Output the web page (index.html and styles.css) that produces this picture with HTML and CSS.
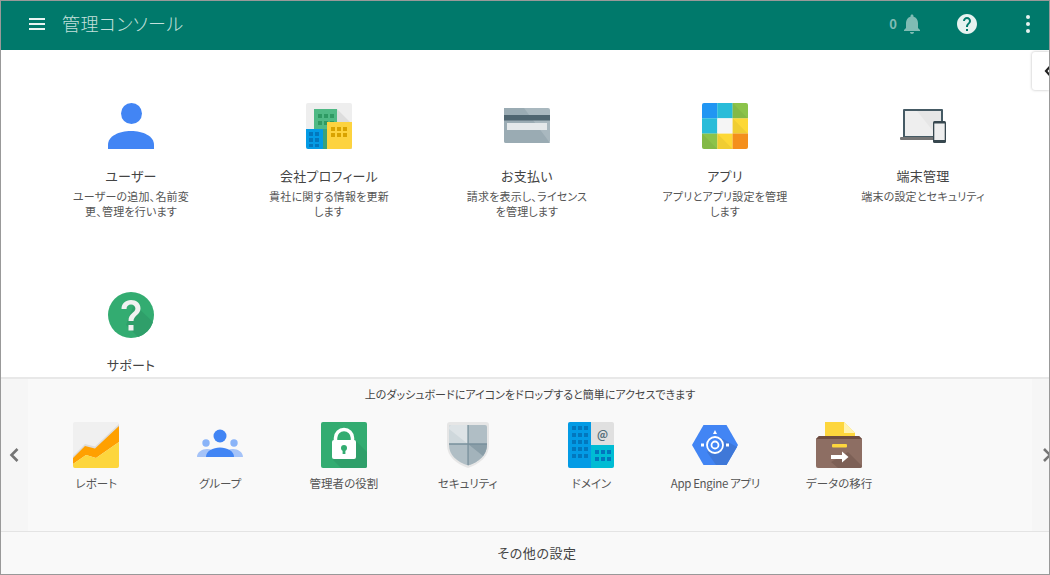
FILE: index.html
```html
<!DOCTYPE html>
<html lang="ja">
<head>
<meta charset="utf-8">
<title>管理コンソール</title>
<link rel="stylesheet" href="styles.css">
</head>
<body>
<div class="window">
  <header class="topbar">
    <svg class="menu" viewBox="0 0 16 12"><path d="M0 0h16v2H0zM0 5h16v2H0zM0 10h16v2H0z"/></svg>
    <h1 class="brand">管理コンソール</h1>
    <span class="count">0</span>
    <svg class="bell" viewBox="4 2 16 20"><path d="M12 22c1.1 0 2-.9 2-2h-4c0 1.1.89 2 2 2zm6-6v-5c0-3.07-1.64-5.64-4.5-6.32V4c0-.83-.67-1.5-1.5-1.5s-1.5.67-1.5 1.5v.68C7.63 5.36 6 7.92 6 11v5l-2 2v1h16v-1l-2-2z"/></svg>
    <svg class="help" viewBox="2 2 20 20"><path d="M12 2C6.48 2 2 6.48 2 12s4.48 10 10 10 10-4.48 10-10S17.52 2 12 2zm1 17h-2v-2h2v2zm2.07-7.75l-.9.92C13.45 12.9 13 13.5 13 15h-2v-.5c0-1.1.45-2.1 1.17-2.83l1.24-1.26c.37-.36.59-.86.59-1.41 0-1.1-.9-2-2-2s-2 .9-2 2H8c0-2.21 1.79-4 4-4s4 1.79 4 4c0 .88-.36 1.68-.93 2.25z"/></svg>
    <svg class="dots" viewBox="0 0 4 18"><circle cx="2" cy="2" r="2"/><circle cx="2" cy="9" r="2"/><circle cx="2" cy="16" r="2"/></svg>
  </header>

  <main class="dash">
    <div class="sidetab"><svg viewBox="0 0 8 12"><path d="M6 1.500 2 6l4 4.500" fill="none" stroke="#222" stroke-width="2.200"/></svg></div>
    <div class="tiles">
      <section class="tile">
        <svg class="ico" viewBox="0 0 46 46"><circle cx="23.5" cy="10.5" r="10.5" fill="#4285f4"/><path d="M0 46v-4C0 33 11 28 23 28s23 5 23 14v4z" fill="#4285f4"/></svg>
        <h2>ユーザー</h2>
        <p>ユーザーの追加、名前変更、管理を行います</p>
      </section>
      <section class="tile">
        <svg class="ico" viewBox="0 0 46 46"><rect width="46" height="46" rx="2" fill="#eee"/><path d="M31 6 46 21V46H20z" fill="#ddd"/><rect x="8" y="6" width="23" height="40" fill="#4fb985"/><g fill="#2e9a63"><path d="M12 11h4v4h-4zM18 11h4v4h-4zM24 11h4v4h-4zM12 18h4v4h-4zM18 18h4v4h-4zM24 18h4v4h-4z"/></g><path d="M0 26h17v20H2a2 2 0 0 1-2-2z" fill="#039be5"/><g fill="#0277bd"><path d="M3 29h4v4H3zM9 29h4v4H9zM3 35h4v4H3zM9 35h4v4H9zM3 41h4v3H3zM9 41h4v3H9z"/></g><path d="M17 26h4v20h-4z" fill="#3aa17a"/><path d="M21 19h25v25a2 2 0 0 1-2 2H21z" fill="#fdd33f"/><g fill="#d9a300"><path d="M25 24h4v4h-4zM31 24h4v4h-4zM37 24h4v4h-4zM25 30h4v4h-4zM31 30h4v4h-4zM37 30h4v4h-4z"/></g></svg>
        <h2>会社プロフィール</h2>
        <p>貴社に関する情報を更新します</p>
      </section>
      <section class="tile">
        <svg class="ico" viewBox="0 0 46 46"><rect y="5" width="46" height="35" rx="2" fill="#a9b8bf"/><path d="M0 5h20l26 35H2a2 2 0 0 1-2-2z" fill="#9aabb3"/><rect y="12" width="46" height="5.500" fill="#4f6570"/><rect x="3" y="20" width="40" height="7" fill="#e4e8ea"/></svg>
        <h2>お支払い</h2>
        <p>請求を表示し、ライセンスを管理します</p>
      </section>
      <section class="tile">
        <svg class="ico" viewBox="0 0 46 46"><defs><clipPath id="rc"><rect width="46" height="46" rx="2"/></clipPath></defs><g clip-path="url(#rc)"><rect width="15.4" height="15.4" fill="#2196f3"/><rect x="15.3" width="15.4" height="15.4" fill="#29bcd9"/><rect x="30.6" width="15.4" height="15.4" fill="#8bc34a"/><rect y="15.3" width="15.4" height="15.4" fill="#29bcd9"/><rect x="15.3" y="15.3" width="15.4" height="15.4" fill="#f5f5f5"/><rect x="30.6" y="15.3" width="15.4" height="15.4" fill="#fdd835"/><rect y="30.6" width="15.4" height="15.4" fill="#8bc34a"/><rect x="15.3" y="30.6" width="15.4" height="15.4" fill="#fdd835"/><rect x="30.6" y="30.6" width="15.4" height="15.4" fill="#f48f1c"/><path d="M30.6 0 46 15.4H30.6zM30.6 15.3 46 30.7H30.6zM0 30.6 15.4 46H0zM15.3 30.6 30.7 46H15.3z" fill="#000" opacity=".05"/></g></svg>
        <h2>アプリ</h2>
        <p>アプリとアプリ設定を管理します</p>
      </section>
      <section class="tile">
        <svg class="ico" viewBox="0 0 46 46"><rect x="3" y="6" width="40" height="29" rx="1" fill="#455a64"/><rect x="5" y="8" width="36" height="25" fill="#e6e6e6"/><path d="M5 8h12l20 25H5z" fill="#eee"/><rect x="0" y="34" width="38" height="3" rx="1" fill="#757575"/><rect x="33" y="18" width="13" height="22" rx="1.5" fill="#37474f"/><rect x="34.3" y="20.5" width="10.4" height="16.5" fill="#eee"/></svg>
        <h2>端末管理</h2>
        <p>端末の設定とセキュリティ</p>
      </section>
      <section class="tile">
        <svg class="ico" viewBox="0 0 46 46"><circle cx="23" cy="23" r="23" fill="#33ac71"/><path d="M26 12 45 30A23 23 0 0 1 30 45L18 33z" fill="#2f9f6a"/><path d="M23 8c-5.500 0-9.500 3.500-9.500 9h5c0-2.700 2-4.400 4.500-4.400s4.400 1.700 4.400 4c0 4.400-6.900 4.500-6.900 12.400h5c0-5.400 7-6.400 7-12.600C32.500 11.300 28.500 8 23 8zM20.500 33h5v5.500h-5z" fill="#f1f1f1"/></svg>
        <h2>サポート</h2>
      </section>
    </div>
  </main>

  <section class="tray">
    <div class="pager"><svg viewBox="0 0 10 14"><path d="M8.500 1 2.500 7l6 6" fill="none" stroke="#757575" stroke-width="2.600"/></svg></div>
    <div class="shelf">
      <div class="hint">上のダッシュボードにアイコンをドロップすると簡単にアクセスできます</div>
      <div class="items">
        <div class="item">
          <svg class="ico" viewBox="0 0 46 46"><rect width="46" height="46" rx="2" fill="#f0f0f0"/><path d="M0 34 12 22l10 2.500L46 2v3L22 27l-10-2.500L0 37z" fill="#ddd"/><path d="M0 36 12 24l10 2.500L46 4v16L23 36l-10-3L0 42z" fill="#ffa000"/><path d="M0 42l13-9 10 3 23-16v24a2 2 0 0 1-2 2H2a2 2 0 0 1-2-2z" fill="#fdd63d"/></svg>
          <span>レポート</span>
        </div>
        <div class="item">
          <svg class="ico" viewBox="0 0 46 46"><circle cx="9" cy="21" r="3.700" fill="#8ab4f8"/><circle cx="37" cy="21" r="3.700" fill="#8ab4f8"/><path d="M0 35c0-5 5-8 10-8 4 0 7 2 9 4h8c2-2 5-4 9-4 5 0 10 3 10 8z" fill="#a5c3f8"/><circle cx="23" cy="14" r="6.500" fill="#4285f4"/><path d="M9 35c0-6 7-9.500 14-9.500S37 29 37 35z" fill="#4285f4"/></svg>
          <span>グループ</span>
        </div>
        <div class="item">
          <svg class="ico" viewBox="0 0 46 46"><rect width="46" height="46" rx="2" fill="#33ac71"/><path d="M33 17 46 30v14a2 2 0 0 1-2 2H20L12 38z" fill="#2f9f6a"/><path d="M14.500 20v-4a8.500 8.500 0 0 1 17 0v4" fill="none" stroke="#fff" stroke-width="3.500"/><rect x="11" y="18" width="24" height="19" rx="2" fill="#fff"/><circle cx="23" cy="26" r="3" fill="#33ac71"/><rect x="21.600" y="26" width="2.800" height="6" fill="#33ac71"/></svg>
          <span>管理者の役割</span>
        </div>
        <div class="item">
          <svg class="ico" viewBox="0 0 46 46"><path d="M5 0h36a3 3 0 0 1 3 3v20c0 11-9 19-21 23C11 42 2 34 2 23V3a3 3 0 0 1 3-3z" fill="#e6e6e6"/><path d="M6 3h34a2 2 0 0 1 2 2v18c0 10-8 17-19 20.500C12 40 4 33 4 23V5a2 2 0 0 1 2-2z" fill="#b0bec5"/><path d="M6 3h17v19H4V5a2 2 0 0 1 2-2z" fill="#dde3e6"/><path d="M4 7 23 22H4z" fill="#cfd8dc"/><path d="M23 22h19c0 11-8 18-19 21.500z" fill="#a3b3bb"/><path d="M23 22h19c0 4-1 8-4 12z" fill="#8a9ea8"/><path d="M4 21.300h38v1.400H4zM22.400 3h1.300v40h-1.300z" fill="#78909c"/></svg>
          <span>セキュリティ</span>
        </div>
        <div class="item">
          <svg class="ico" viewBox="0 0 46 46"><rect width="46" height="46" rx="2" fill="#e0e0e0"/><path d="M0 2a2 2 0 0 1 2-2h21v46H2a2 2 0 0 1-2-2z" fill="#039be5"/><path d="M23 23h23v21a2 2 0 0 1-2 2H23z" fill="#00bcd4"/><g fill="#0277bd"><path d="M4 4h4v4H4zM10 4h4v4h-4zM16 4h4v4h-4zM4 11h4v4H4zM10 11h4v4h-4zM16 11h4v4h-4zM4 18h4v4H4zM10 18h4v4h-4zM16 18h4v4h-4zM4 25h4v4H4zM10 25h4v4h-4zM16 25h4v4h-4zM4 32h4v4H4zM10 32h4v4h-4zM16 32h4v4h-4zM27 28h4v4h-4zM33 28h4v4h-4zM39 28h4v4h-4zM27 35h4v4h-4zM33 35h4v4h-4zM39 35h4v4h-4z"/></g><text class="at" x="34.500" y="17" text-anchor="middle">@</text></svg>
          <span>ドメイン</span>
        </div>
        <div class="item">
          <svg class="ico" viewBox="0 0 46 46"><path d="M11.500 3h23L46 23 34.500 43h-23L0 23z" fill="#4285f4"/><path d="M29 16 45 25 34.500 43H24L15 30z" fill="#3f78d8"/><circle cx="23" cy="23" r="8" fill="#4285f4" stroke="#fff" stroke-width="1.800"/><circle cx="23" cy="23" r="3.500" fill="none" stroke="#fff" stroke-width="1.800"/><path d="M23 8l2 4h-4zM9 21.500h3v3H9zM34 21.500h3v3h-3z" fill="#fff"/></svg>
          <span class="latin">App Engine アプリ</span>
        </div>
        <div class="item">
          <svg class="ico" viewBox="0 0 46 46"><path d="M9 0h19l11 11v10H9z" fill="#fdd63d"/><path d="M28 0l11 11H28z" fill="#fff3b0"/><path d="M3 14h40l3 3v27a2 2 0 0 1-2 2H2a2 2 0 0 1-2-2V17z" fill="#8d6e63"/><path d="M3 14h40l3 3H0z" fill="#6d4c41"/><path d="M32 30 46 44a2 2 0 0 1-2 2H22L15 40z" fill="#7d6056"/><rect x="16" y="22" width="15" height="3.500" rx="1" fill="#fdd63d"/><path d="M15 33h11v-3.500l6.500 5.500-6.500 5.500V37H15z" fill="#fff"/></svg>
          <span>データの移行</span>
        </div>
      </div>
    </div>
    <div class="pager"><svg viewBox="0 0 10 14"><path d="M2 1l6 6-6 6" fill="none" stroke="#757575" stroke-width="2.600"/></svg></div>
  </section>

  <footer class="more">その他の設定</footer>
</div>
</body>
</html>
```

FILE: styles.css
```css
* { box-sizing: border-box; }
html, body { margin: 0; padding: 0; }
body {
  font-family: "Noto Sans CJK JP", "Noto Sans", sans-serif;
  font-feature-settings: "palt";
  color: #444;
}
.window {
  width: 1050px;
  height: 575px;
  border: 1px solid #999;
  display: flex;
  flex-direction: column;
  overflow: hidden;
  background: #fff;
}
.topbar {
  flex: none;
  height: 49px;
  background: #00796b;
  display: flex;
  align-items: center;
  padding: 0 0 3px 28px;
}
.menu { width: 16px; height: 12px; fill: #e8f4f2; margin-right: 17px; margin-top: -1px; }
.brand {
  margin: -2px 0 0;
  flex: 1;
  font-size: 18px;
  letter-spacing: .45px;
  font-weight: 300;
  color: #c4e0dc;
  line-height: 1;
}
.count { font-size: 13px; font-weight: 700; color: #80bcb4; margin-right: 7px; margin-top: -2px; }
.bell { width: 16px; height: 20px; fill: #80bcb4; margin-right: 37px; }
.help { width: 20px; height: 20px; fill: #e6f2f0; margin-right: 49px; }
.dots { width: 4px; height: 18px; fill: #e6f2f0; margin-right: 19px; }

.dash {
  flex: 1;
  min-height: 0;
  position: relative;
  overflow: hidden;
  padding: 53px 0 0 31px;
}
.sidetab {
  position: absolute;
  top: 2px;
  right: 0;
  width: 17px;
  height: 38px;
  background: #fff;
  border-radius: 3px 0 0 3px;
  box-shadow: 0 0 3px rgba(0, 0, 0, .28);
  overflow: hidden;
}
.sidetab svg { position: absolute; left: 12px; top: 13px; width: 8px; height: 12px; }
.tiles {
  display: grid;
  grid-template-columns: repeat(5, 198px);
  grid-auto-rows: 189px;
}
.tile { display: flex; flex-direction: column; align-items: center; text-align: center; }
.ico { display: block; width: 46px; height: 46px; flex: none; }
.tile h2 {
  margin: 17px 0 0;
  font-size: 13px;
  letter-spacing: .25px;
  line-height: 20px;
  font-weight: 400;
  color: #444;
}
.tile p {
  margin: 3px 0 0;
  width: 128px;
  font-size: 11px;
  letter-spacing: .2px;
  line-height: 15px;
  color: #555;
}
.tray {
  flex: none;
  height: 154px;
  display: flex;
  background: #f9f9f9;
  border-top: 2px solid #e8e8e8;
}
.pager {
  flex: none;
  width: 27px;
  background: #f6f6f6;
  display: flex;
  align-items: center;
  padding: 0 0 1px 8px;
}
.pager svg { width: 10px; height: 14px; flex: none; }
.pager:last-child { width: 17px; padding-left: 10px; overflow: hidden; }
.shelf { flex: 1; min-width: 0; }
.hint {
  height: 43px;
  padding-top: 6px;
  text-align: center;
  font-size: 11px;
  line-height: 18px;
  color: #444;
}
.items { display: flex; padding-left: 6.4px; }
.item {
  flex: none;
  width: 123.8px;
  display: flex;
  flex-direction: column;
  align-items: center;
  font-size: 11.5px;
  line-height: 18px;
  color: #555;
}
.item span { margin-top: 6px; white-space: nowrap; }
.item .latin { letter-spacing: -.35px; }
.at { font-size: 11px; fill: #546e7a; font-weight: 700; }
.more {
  flex: none;
  height: 43px;
  background: #f9f9f9;
  border-top: 1px solid #e4e4e4;
  display: flex;
  align-items: center;
  justify-content: center;
  padding: 0 0 2px 24px;
  font-size: 13px;
  letter-spacing: .6px;
  color: #444;
}
```
